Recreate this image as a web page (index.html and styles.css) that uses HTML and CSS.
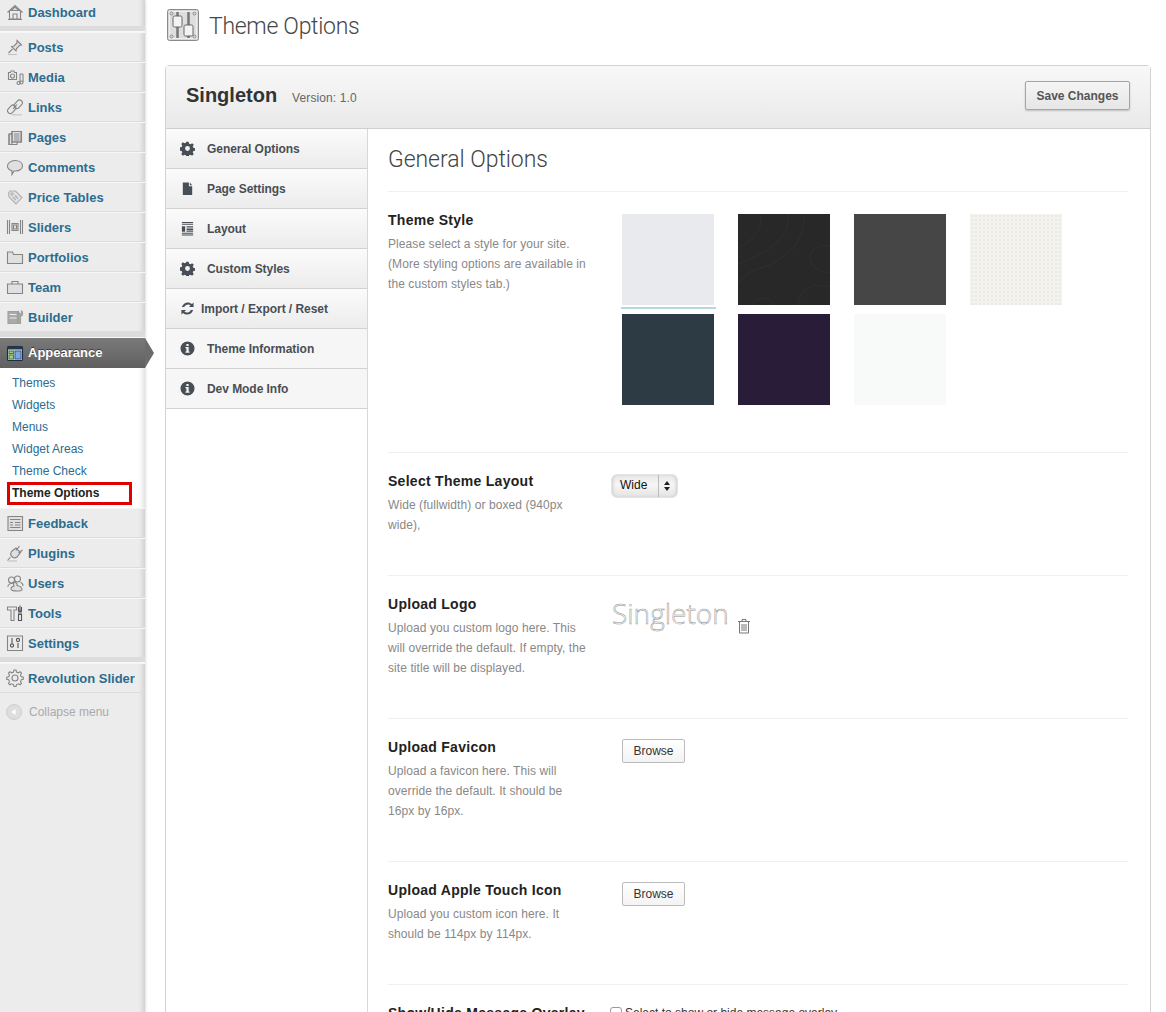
FILE: index.html
```html
<!DOCTYPE html>
<html lang="en">
<head>
    <meta charset="UTF-8">
    <title>Theme Options</title>
    <link rel="stylesheet" href="styles.css">
</head>
<body>

    <!-- admin sidebar -->
    <aside class="sidebar">
        <a class="menu-item first"><svg class="mi" viewBox="0 0 18 18"><path class="soft" d="M5 7.500 9 4l4 3.500z"/><path d="M1.500 9.500 9 2.500l7.500 7M3.500 8v8h11V8M7 16v-5h4v5M2 16.500h14"/></svg>Dashboard</a>
        <div class="menu-sep"></div>
        <a class="menu-item"><svg class="mi" viewBox="0 0 18 18"><path class="soft" d="M11 2.500l4.500 4.500-2 .5-3 3-.5 2.500-4.500-4.500 2.500-.5 3-3z"/><path d="M6.500 11 2.500 15"/><path class="faint" d="M2 16.500h9"/></svg>Posts</a>
        <a class="menu-item"><svg class="mi" viewBox="0 0 18 18"><path d="M2.500 4.500h2l.5-1.500h3l.5 1.500h2v7h-8zM14 6v8M17 6v8M14 6h3"/><circle cx="6.500" cy="8" r="2"/><circle cx="12.500" cy="15" r="1.500"/><circle cx="15.500" cy="14.500" r="1.500"/></svg>Media</a>
        <a class="menu-item"><svg class="mi" viewBox="0 0 18 18"><rect x="9.500" y="1.500" width="5.500" height="9.500" rx="2.700" transform="rotate(42 12.200 6.200)"/><rect x="3" y="6.500" width="5.500" height="9.500" rx="2.700" transform="rotate(42 5.700 11.200)"/><path d="M7 11l4-4.500"/><path class="faint" d="M6 16.800h10"/></svg>Links</a>
        <a class="menu-item"><svg class="mi" viewBox="0 0 18 18"><path class="soft" d="M3 6h3v10.500H3zM6 3.500h9v10.500H6z"/><path d="M3 6h3M3 6v10.500h8V14M6 3.500h9.500V14H6zM8 6h5.500M8 8h5.500M8 10h5.500M8 12h5.500"/></svg>Pages</a>
        <a class="menu-item"><svg class="mi" viewBox="0 0 18 18"><path class="soft" d="M9 2.500c4 0 7.500 2 7.500 5.500S13 13 9.500 13H8l-2 3.500V12.700C3.500 12 1.500 10 1.500 8 1.500 5 5 2.500 9 2.500z"/></svg>Comments</a>
        <a class="menu-item"><svg class="mi light" viewBox="0 0 18 18"><path class="soft" d="M2.500 5 4 3h5.500L16 9.500 10 16 3 9z"/><circle cx="6" cy="6" r="1.200"/><path d="M7 9l3 3M9 7.500l3 3"/></svg>Price Tables</a>
        <a class="menu-item"><svg class="mi" viewBox="0 0 18 18"><path d="M1.500 2v14M3.500 2v14M14.500 2v14M16.500 2v14"/><path class="soft" d="M6 5.500h6v7H6z"/><path d="M7.500 7h3v4h-3z"/></svg>Sliders</a>
        <a class="menu-item"><svg class="mi" viewBox="0 0 18 18"><path class="soft" d="M1.500 4h5l1 2.500H16.500v9h-15z"/></svg>Portfolios</a>
        <a class="menu-item"><svg class="mi" viewBox="0 0 18 18"><path class="soft" d="M1.500 6h15v9.500h-15z"/><path d="M6 6V3.500h6V6"/></svg>Team</a>
        <a class="menu-item"><svg class="mi light" viewBox="0 0 18 18"><path class="solid" d="M2 3.500h9.500V15.500H2z"/><path class="solid" d="M12.500 3l1 3 2-.5v-2.500l1 1V7l-2 1.500v7h-2V8.500z"/><path class="bright" d="M3.500 6.500h7M3.500 10h7"/></svg>Builder</a>
        <div class="menu-sep wide"></div>

        <div class="menu-current">
            <svg class="mi" viewBox="0 0 18 18"><rect class="tile" x="1.500" y="2.500" width="15" height="14" rx="1"/><rect class="tile-top" x="1.500" y="2.500" width="15" height="3"/><rect class="tile-green" x="3" y="7" width="4.500" height="2.500"/><rect class="tile-green" x="3" y="11" width="4.500" height="4"/><rect class="tile-blue" x="9" y="7" width="6" height="8"/></svg>
            Appearance
        </div>
        <ul class="submenu">
            <li>Themes</li>
            <li>Widgets</li>
            <li>Menus</li>
            <li>Widget Areas</li>
            <li>Theme Check</li>
            <li class="active">Theme Options<span class="marker"></span></li>
        </ul>

        <a class="menu-item"><svg class="mi" viewBox="0 0 18 18"><path class="soft" d="M2 2.500h14.500v14H2z"/><path d="M4 5.500h10.500M4 8.500h3M9 8.500h5.500M4 11h3M9 11h5.500M4 13.500h10.500"/></svg>Feedback</a>
        <a class="menu-item"><svg class="mi" viewBox="0 0 18 18"><path class="soft" d="M6 7l4-3 4.500 4.500-3.500 4.500c-1.500 1-3 1-4 .5l-2-2c-.5-1-.5-2.500.500-4z"/><path d="M10 6.500l3.500-4.500M12.500 9l4-3M4.500 13l-3 3.500"/><path class="faint" d="M2 17h9"/></svg>Plugins</a>
        <a class="menu-item"><svg class="mi" viewBox="0 0 18 18"><circle cx="5.500" cy="6" r="3"/><circle cx="11.500" cy="5" r="3"/><path d="M8 9.500C4.500 8.500 1.500 11 2 13M14.500 8.500c1.500.5 2.500 2 2.500 3.500"/><path class="soft" d="M8.500 8.500c2.500 0 3 2 2.500 3 3 .5 5 2 5 4 0 1-2 1.500-5 1.500s-6-.5-6-2c0-1.500 1-2.500 3-3-1-1.500-.5-3.500.5-3.500z"/></svg>Users</a>
        <a class="menu-item"><svg class="mi" viewBox="0 0 18 18"><path d="M1.500 3h9v3h-2.500v10.500H5V6H1.500z"/><path class="dark" d="M14 1.500v5M12.500 3v4h3V3M13 7.500h2v3h-2zM12.500 10.500h3v6h-3z"/></svg>Tools</a>
        <a class="menu-item"><svg class="mi" viewBox="0 0 18 18"><path d="M1.500 2h15v14.500h-15z"/><path class="dark" d="M6 4v5M12 9v5"/><circle class="dark" cx="6" cy="11.500" r="1.600"/><circle class="dark" cx="12" cy="6" r="1.600"/></svg>Settings</a>
        <div class="menu-sep"></div>
        <a class="menu-item"><svg class="mi" viewBox="0 0 18 18"><path d="M8 1.500h2l.5 2 1.800.8 1.800-1 1.400 1.400-1 1.800.8 1.800 2 .5v2l-2 .5-.8 1.800 1 1.800-1.400 1.400-1.800-1-1.800.8-.5 2H8l-.5-2-1.800-.8-1.800 1-1.400-1.400 1-1.800-.8-1.800-2-.5v-2l2-.5.8-1.800-1-1.800 1.400-1.400 1.800 1 1.800-.8z" transform="translate(0 -.5)"/><circle cx="9" cy="9" r="3"/></svg>Revolution Slider</a>
        <div class="collapse">
            <span class="collapse-btn"><svg viewBox="0 0 18 18"><path d="M11 5v8L5.500 9z"/></svg></span>
            Collapse menu
        </div>
    </aside>

    <main class="main">
        <div class="page-title">
            <svg class="title-icon" viewBox="0 0 32 32">
                <rect x=".5" y=".5" width="31" height="31" rx="2" fill="#d6d6d6" stroke="#8a8a8a"/>
                <rect x="2.500" y="2.500" width="27" height="27" fill="#dedede" stroke="#efefef"/>
                <path d="M10.500 3v26M21.500 3v26" stroke="#777" stroke-width="2.500"/>
                <rect x="6" y="7" width="9" height="11" rx="1.500" fill="#f3f3f3" stroke="#666"/>
                <rect x="17" y="16" width="9" height="11" rx="1.500" fill="#f3f3f3" stroke="#666"/>
                <circle cx="4.500" cy="4.500" r="1.500" fill="none" stroke="#888"/>
                <circle cx="27.500" cy="4.500" r="1.500" fill="none" stroke="#888"/>
                <circle cx="4.500" cy="27.500" r="1.500" fill="none" stroke="#888"/>
                <circle cx="27.500" cy="27.500" r="1.500" fill="none" stroke="#888"/>
            </svg>
            <h1>Theme Options</h1>
        </div>

        <section class="panel">
            <header class="panel-head">
                <strong class="brand">Singleton</strong>
                <span class="version">Version: 1.0</span>
                <button class="save">Save Changes</button>
            </header>

            <div class="panel-body">
                <!-- tabs -->
                <nav class="tabs">
                    <a class="tab"><svg class="ti" viewBox="0 0 16 16"><path fill-rule="evenodd" d="M6.700.8h2.600l.4 2 1.500.6 1.700-1.100 1.800 1.800-1.100 1.700.6 1.500 2 .4v2.600l-2 .4-.6 1.500 1.100 1.700-1.800 1.800-1.700-1.100-1.500.6-.4 2H6.700l-.4-2-1.500-.6-1.700 1.100-1.800-1.800 1.100-1.700-.6-1.500-2-.4V6.700l2-.4.6-1.500-1.100-1.700 1.800-1.800 1.700 1.100 1.500-.6zM8 5.400a2.600 2.600 0 1 0 0 5.200 2.600 2.600 0 0 0 0-5.200z"/></svg>General Options</a>
                    <a class="tab"><svg class="ti" viewBox="0 0 16 16"><path d="M3 1.500h6.500v4h3.500v9.500H3zM10.500 1.500l2.500 3h-2.500z"/></svg>Page Settings</a>
                    <a class="tab"><svg class="ti" viewBox="0 0 16 16"><path d="M2 1h12v1H2zM2 3h12v1H2zM2 5.500h3.500v6H2zM7 5.500h7v1.500H7zM7 8h7v1.500H7zM7 10.200h7v1.300H7zM2 12.500h12v1H2zM2 14.500h12v1H2z"/></svg>Layout</a>
                    <a class="tab"><svg class="ti" viewBox="0 0 16 16"><path fill-rule="evenodd" d="M6.700.8h2.600l.4 2 1.500.6 1.700-1.100 1.800 1.800-1.100 1.700.6 1.500 2 .4v2.600l-2 .4-.6 1.500 1.100 1.700-1.800 1.800-1.700-1.100-1.500.6-.4 2H6.700l-.4-2-1.500-.6-1.700 1.100-1.800-1.800 1.100-1.700-.6-1.500-2-.4V6.700l2-.4.6-1.500-1.100-1.700 1.800-1.800 1.700 1.100 1.500-.6zM8 5.400a2.600 2.600 0 1 0 0 5.200 2.600 2.600 0 0 0 0-5.200z"/></svg>Custom Styles</a>
                    <a class="tab tight"><svg class="ti" viewBox="0 0 16 16"><path d="M14.500 1.500v5h-5l1.800-1.800C9.300 3 6 3.300 4.500 6.500H2C3.500 1.500 9 0 12.800 3.200z"/><path d="M1.500 14.500v-5h5l-1.800 1.800c2 1.700 5.300 1.400 6.800-1.800H14c-1.500 5-7 6.500-10.800 3.300z"/></svg>Import / Export / Reset</a>
                    <a class="tab plain"><svg class="ti" viewBox="0 0 16 16"><path fill-rule="evenodd" d="M8 .5a7.500 7.500 0 1 1 0 15 7.500 7.500 0 0 1 0-15zM6.800 3.200v2.200h2.400V3.200zM5.800 6.500v1.300h1v3.400h-1v1.300h4.400v-1.300h-1V6.500z"/></svg>Theme Information</a>
                    <a class="tab plain"><svg class="ti" viewBox="0 0 16 16"><path fill-rule="evenodd" d="M8 .5a7.500 7.500 0 1 1 0 15 7.500 7.500 0 0 1 0-15zM6.800 3.200v2.200h2.400V3.200zM5.800 6.500v1.300h1v3.400h-1v1.300h4.400v-1.300h-1V6.500z"/></svg>Dev Mode Info</a>
                </nav>

                <!-- options -->
                <div class="content">
                    <h2 class="content-title">General Options</h2>

                    <div class="option">
                        <div class="option-text">
                            <h3>Theme Style</h3>
                            <p>Please select a style for your site. (More styling options are available in the custom styles tab.)</p>
                        </div>
                        <div class="swatches">
                            <div class="swatch s-paper picked"></div>
                            <div class="swatch s-black">
                                <svg viewBox="0 0 92 91"><path d="M22 0c4 14-6 26-22 34M50 0c4 24-24 40-50 50M66 0c2 30-22 48-44 54C12 57 5 62 0 70M92 32c-16-2-24 8-18 18 3 6 10 8 18 9M92 73c-18-4-30 0-32 18M36 91c-4-10-18-8-22 0"/></svg>
                            </div>
                            <div class="swatch s-slate"></div>
                            <div class="swatch s-linen"></div>
                            <div class="swatch s-teal"></div>
                            <div class="swatch s-plum"></div>
                            <div class="swatch s-white"></div>
                        </div>
                    </div>

                    <div class="option">
                        <div class="option-text">
                            <h3>Select Theme Layout</h3>
                            <p>Wide (fullwidth) or boxed (940px wide),</p>
                        </div>
                        <div class="select">
                            <span class="select-value">Wide</span>
                            <span class="select-arrows"></span>
                        </div>
                    </div>

                    <div class="option">
                        <div class="option-text">
                            <h3>Upload Logo</h3>
                            <p>Upload you custom logo here. This will override the default. If empty, the site title will be displayed.</p>
                        </div>
                        <div class="logo-preview">
                            <span class="logo-text">Singleton</span>
                            <svg class="trash" viewBox="0 0 14 16"><path d="M1 3.500h12M5 3.500V1.500h4v2M2.500 3.500v11.500h9V3.500M5 6v7M7 6v7M9 6v7"/></svg>
                        </div>
                    </div>

                    <div class="option">
                        <div class="option-text">
                            <h3>Upload Favicon</h3>
                            <p>Upload a favicon here. This will override the default. It should be 16px by 16px.</p>
                        </div>
                        <button class="browse">Browse</button>
                    </div>

                    <div class="option">
                        <div class="option-text">
                            <h3>Upload Apple Touch Icon</h3>
                            <p>Upload you custom icon here. It should be 114px by 114px.</p>
                        </div>
                        <button class="browse">Browse</button>
                    </div>

                    <div class="option">
                        <div class="option-text">
                            <h3>Show/Hide Message Overlay</h3>
                        </div>
                        <label class="check"><span class="check-box"></span>Select to show or hide message overlay</label>
                    </div>
                </div>
            </div>
        </section>
    </main>

</body>
</html>
```

FILE: styles.css
```css
html, body {
    height: 1012px;
    overflow: hidden;
}

body {
    margin: 0;
    display: flex;
    background-color: #fff;
    font-family: "Liberation Sans", Arial, sans-serif;
    font-size: 12px;
    color: #333;
}

/* sidebar */
.sidebar {
    width: 145px;
    flex: none;
    background-color: #ececec;
    box-shadow: inset -7px 0 6px -6px rgba(0, 0, 0, .18), 1px 0 2px rgba(0, 0, 0, .12);
}

.menu-item {
    height: 30px;
    box-sizing: border-box;
    display: flex;
    align-items: center;
    gap: 4px;
    padding-left: 6px;
    border-top: 1px solid #f6f6f6;
    border-bottom: 1px solid #dcdcdc;
    font-size: 13px;
    font-weight: bold;
    color: #2b6c90;
}

.menu-item.first {
    margin-top: -3px;
}

.menu-sep {
    height: 5px;
    box-sizing: border-box;
    background-color: #dcdcdc;
    border-bottom: 1px solid #f8f8f8;
}

.menu-sep.wide {
    height: 6px;
}

.mi {
    width: 18px;
    height: 18px;
    flex: none;
    fill: none;
    stroke: #858585;
    stroke-width: 1.1;
}

.mi.light { stroke: #b0b0b0; }
.mi .soft { fill: #e0e0e0; }
.mi .solid { fill: #a9a9a9; stroke: #a0a0a0; }
.mi .bright { stroke: #ececec; }
.mi .faint { stroke: #c4c4c4; }
.mi .dark { stroke: #555; }

.menu-current {
    position: relative;
    height: 30px;
    display: flex;
    align-items: center;
    gap: 4px;
    padding-left: 6px;
    padding-bottom: 1px;
    box-sizing: border-box;
    background: linear-gradient(#7a7a7a, #5f5f5f);
    font-size: 13px;
    font-weight: bold;
    color: #fff;
    text-shadow: 0 -1px 0 rgba(0, 0, 0, .5);
}

.menu-current::after {
    content: "";
    position: absolute;
    left: 145px;
    top: 0;
    border-left: 9px solid #6c6c6c;
    border-top: 15px solid transparent;
    border-bottom: 15px solid transparent;
}

.menu-current .mi { stroke: #1d2d3d; }
.menu-current .tile { fill: #e8eef2; }
.menu-current .tile-top { fill: #25384a; stroke: none; }
.menu-current .tile-green { fill: #a6d07c; stroke: #4a7a3c; }
.menu-current .tile-blue { fill: #7fa7dc; stroke: #3b5f94; }

.submenu {
    list-style: none;
    margin: 0;
    padding: 4px 0 4px 12px;
    height: 140px;
    box-sizing: border-box;
    background-color: #fff;
    box-shadow: inset -7px 0 6px -6px rgba(0, 0, 0, .18);
    color: #2b6c90;
}

.submenu li {
    position: relative;
    height: 22px;
    line-height: 22px;
}

.submenu .active {
    font-weight: bold;
    color: #222;
}

/* the red box drawn on top of the screenshot */
.marker {
    position: absolute;
    left: -5px;
    top: 0;
    width: 125px;
    height: 23px;
    box-sizing: border-box;
    border: 3px solid #e00000;
}

.collapse {
    display: flex;
    align-items: center;
    gap: 7px;
    padding: 11px 0 0 6px;
    color: #aaa;
}

.collapse-btn {
    width: 16px;
    height: 16px;
    border-radius: 50%;
    background-color: #dedede;
    border: 1px solid #cfcfcf;
    box-sizing: border-box;
    display: flex;
}

.collapse-btn svg { fill: #fff; }

/* main */
.main {
    flex: 1;
    padding: 9px 15px 0 20px;
    min-width: 0;
}

.page-title {
    display: flex;
    align-items: center;
    gap: 10px;
    height: 32px;
    padding-left: 2px;
    margin-bottom: 24px;
}

.title-icon {
    width: 32px;
    height: 32px;
    flex: none;
}

.page-title h1 {
    margin: 2px 0 0;
    font-family: Roboto, "Liberation Sans", sans-serif;
    font-size: 23px;
    font-weight: 300;
    letter-spacing: -.3px;
    color: #464646;
}

.panel {
    border: 1px solid #d2d2d2;
    border-radius: 4px 4px 0 0;
}

.panel-head {
    height: 63px;
    box-sizing: border-box;
    display: flex;
    align-items: center;
    padding: 0 20px 3px;
    background: linear-gradient(#f8f8f8, #e9e9e9);
    border-bottom: 1px solid #cfcfcf;
}

.brand {
    font-size: 20px;
    color: #333;
}

.version {
    margin-left: 15px;
    padding-top: 5px;
    letter-spacing: .1px;
    color: #666;
}

.save {
    margin-left: auto;
    width: 105px;
    height: 29px;
    padding: 0;
    border: 1px solid #a5a5a5;
    border-radius: 2px;
    background: linear-gradient(#f5f5f5, #e6e6e6);
    box-shadow: 0 1px 2px rgba(0, 0, 0, .2);
    font-family: inherit;
    font-size: 12px;
    font-weight: bold;
    color: #555;
}

.panel-body {
    display: flex;
}

.tabs {
    width: 201px;
    flex: none;
    border-right: 1px solid #d8d8d8;
}

.tab {
    height: 40px;
    box-sizing: border-box;
    display: flex;
    align-items: center;
    gap: 12px;
    padding-left: 14px;
    background: linear-gradient(#fbfbfb, #ececec);
    border-bottom: 1px solid #d2d2d2;
    font-weight: bold;
    letter-spacing: -.05px;
    color: #484e55;
}

.tab.tight { gap: 6px; }
.tab.plain { background: #f6f6f6; }

.ti {
    width: 15px;
    height: 15px;
    flex: none;
    fill: #484e55;
}

.content {
    flex: 1;
    min-width: 0;
    padding: 0 22px 0 20px;
}

.content-title {
    margin: 0;
    padding: 18px 0;
    font-family: Roboto, "Liberation Sans", sans-serif;
    font-size: 23px;
    line-height: 26px;
    font-weight: 300;
    letter-spacing: -.05px;
    color: #444;
}

.option {
    display: grid;
    grid-template-columns: 223px 1fr;
    align-items: start;
    border-top: 1px solid #efefef;
    padding: 19px 0 40px;
}

.option h3 {
    margin: 0 0 5px;
    font-size: 14px;
    line-height: 18px;
    letter-spacing: .28px;
    color: #222;
}

.option p {
    margin: 0;
    width: 203px;
    line-height: 20px;
    letter-spacing: .08px;
    color: #888;
}

.swatches {
    display: grid;
    grid-template-columns: repeat(4, 92px);
    grid-auto-rows: 91px;
    column-gap: 24px;
    row-gap: 9px;
    margin: 3px 0 7px 11px;
}

.swatch { position: relative; }
.swatch svg { display: block; fill: none; stroke: #303030; }

.s-paper { background-color: #e9eaee; }
.s-black { background-color: #282828; }
.s-slate { background-color: #464646; }
.s-linen {
    background-color: #f3f2ee;
    background-image: radial-gradient(#ebe9e3 1px, transparent 1px);
    background-size: 4px 4px;
}
.s-teal { background-color: #2c3b44; }
.s-plum { background-color: #281c38; }
.s-white { background-color: #f8f9f9; }

.picked::after {
    content: "";
    position: absolute;
    left: -1px;
    right: -2px;
    bottom: -4px;
    height: 2px;
    background-color: #b3d9e3;
}

.select {
    width: 67px;
    height: 24px;
    box-sizing: border-box;
    margin-top: 2px;
    display: flex;
    border: 1px solid #e4e4e4;
    border-radius: 6px;
    background: linear-gradient(#e8e8e8, #f6f6f6 45%, #e4e4e4);
    box-shadow: inset 2px 0 3px -1px #ccc, inset -2px 0 3px -1px #ccc;
    color: #111;
}

.select-value {
    width: 47px;
    padding-left: 8px;
    box-sizing: border-box;
    line-height: 21px;
    border-right: 1px solid #bbb;
}

.select-arrows {
    position: relative;
    flex: 1;
}

.select-arrows::before, .select-arrows::after {
    content: "";
    position: absolute;
    left: 5px;
    border-left: 3px solid transparent;
    border-right: 3px solid transparent;
}

.select-arrows::before { top: 6px; border-bottom: 4px solid #222; }
.select-arrows::after { top: 12px; border-top: 4px solid #222; }

.logo-preview {
    display: flex;
    align-items: flex-end;
    gap: 8px;
    height: 40px;
    padding-left: 1px;
}

.logo-text {
    margin-bottom: 3px;
    font-family: "Open Sans", sans-serif;
    font-size: 28px;
    font-weight: 300;
    line-height: 38px;
    color: #fff;
    -webkit-text-stroke: .5px #8f8f8f;
}

.trash {
    width: 14px;
    height: 16px;
    margin-bottom: 1px;
    fill: none;
    stroke: #777;
}

.browse {
    justify-self: start;
    width: 63px;
    height: 24px;
    margin: 1px 0 0 11px;
    padding: 0;
    border: 1px solid #bbb;
    border-radius: 2px;
    background: linear-gradient(#fff, #f3f3f3);
    font-family: inherit;
    font-size: 12px;
    color: #333;
}

.check {
    display: flex;
    align-items: flex-start;
    gap: 3px;
    margin-top: 2px;
    margin-left: -1px;
    line-height: 14px;
    color: #333;
}

.check-box {
    width: 12px;
    height: 12px;
    margin-top: 1px;
    box-sizing: border-box;
    border: 1px solid #999;
    border-radius: 3px;
    background-color: #fff;
}
```
